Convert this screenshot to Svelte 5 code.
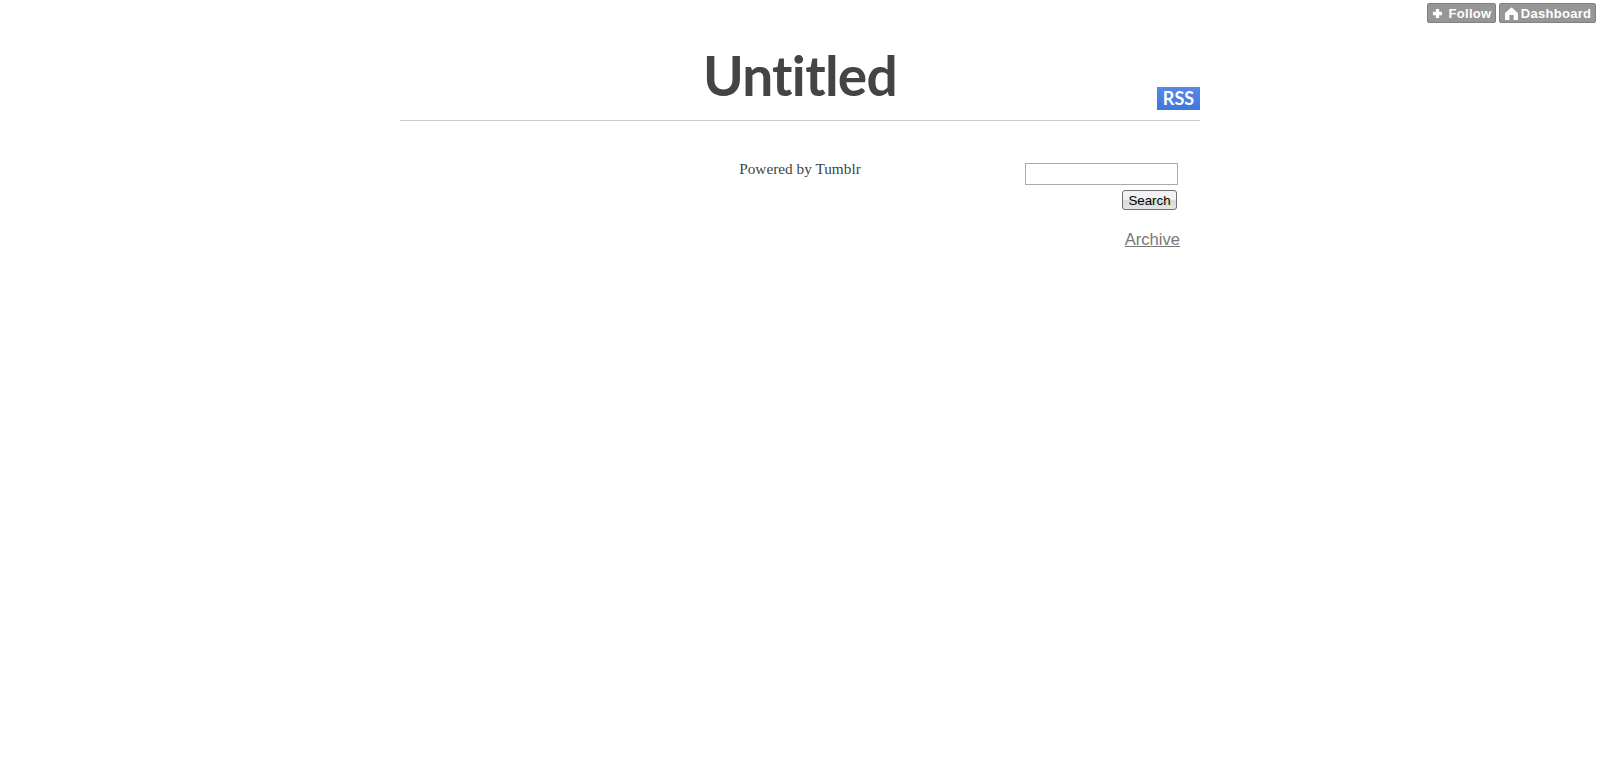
<script>
  let query = $state('');
</script>

<div class="controls">
  <a class="ctl" href="#follow">
    <svg viewBox="0 0 12 12" width="11" height="11" fill="#fff"><path d="M4.200 1h3.600v3.200H11v3.600H7.800V11H4.200V7.800H1V4.200h3.200z"/></svg>
    <span>Follow</span>
  </a>
  <a class="ctl" href="#dashboard">
    <svg viewBox="0 0 14 14" width="15" height="15" fill="#fff"><path d="M7 1.500Q6.500 1.500 6 2L1 6.500V13h4V8.500h4V13h4V6.500L8 2Q7.500 1.500 7 1.500z"/></svg>
    <span>Dashboard</span>
  </a>
</div>

<div class="page">
  <header class="head">
    <h1>Untitled</h1>
    <a class="rss" href="#rss">RSS</a>
  </header>

  <div class="body">
    <div class="left"></div>
    <p class="powered">Powered by Tumblr</p>
    <aside class="side">
      <form class="search" onsubmit={(e) => e.preventDefault()}>
        <input type="text" bind:value={query} />
        <button type="submit">Search</button>
      </form>
      <a class="archive" href="#archive">Archive</a>
    </aside>
  </div>
</div>

<style>
  :global(body) {
    background: #fff;
  }
  .controls {
    position: absolute;
    top: 3px;
    right: 4px;
    display: flex;
    gap: 3px;
  }
  .ctl {
    display: flex;
    align-items: center;
    justify-content: center;
    gap: 2px;
    height: 20px;
    box-sizing: border-box;
    padding: 0 3px;
    background: #969696;
    border: 1px solid #808080;
    border-radius: 2px;
    color: #fff;
    font: bold 13px "Liberation Sans", Arial, sans-serif;
    letter-spacing: 0.3px;
    text-decoration: none;
  }
  .ctl:first-child {
    width: 69px;
    gap: 6px;
  }
  .ctl:last-child {
    width: 97px;
  }
  .page {
    width: 800px;
    margin: 0 auto;
  }
  .head {
    position: relative;
    height: 121px;
    box-sizing: border-box;
    border-bottom: 1px solid #ccc;
    text-align: center;
  }
  h1 {
    margin: 0;
    padding-top: 42px;
    font: 700 55px/1.2 Lato, "Open Sans", sans-serif;
    letter-spacing: -0.7px;
    color: #444;
  }
  .rss {
    position: absolute;
    right: 0;
    bottom: 10px;
    width: 43px;
    height: 23px;
    background: linear-gradient(#5a86e6, #3f78dc);
    color: #fff;
    font: 700 18px/23px Lato, sans-serif;
    text-align: center;
    text-decoration: none;
  }
  .body {
    display: grid;
    grid-template-columns: 300px 200px 300px;
    padding-top: 41px;
  }
  .powered {
    margin: 0;
    text-align: center;
    color: #444;
    font: 15.300px/14px "Liberation Serif", "Times New Roman", serif;
  }
  .side {
    display: flex;
    flex-direction: column;
    align-items: flex-end;
    padding-right: 20px;
  }
  .search {
    display: flex;
    flex-direction: column;
    align-items: flex-end;
    gap: 5px;
    margin-top: 1px;
    margin-right: 2px;
  }
  input {
    width: 153px;
    height: 22px;
    box-sizing: border-box;
    border: 1px solid #a9a9a9;
    padding: 1px 2px;
    background: #fff;
    margin: 0;
  }
  button {
    width: 55px;
    height: 20px;
    margin: 0 1px 0 0;
    padding: 0;
    border: 1px solid #707070;
    border-radius: 3px;
    background: linear-gradient(#f2f2f2 0 45%, #d8d8d8 55%, #e4e4e4);
    color: #000;
    font: 13.300px "Liberation Sans", Arial, sans-serif;
  }
  .archive {
    margin-top: 20px;
    color: #777;
    font: 16.600px/1.2 "Liberation Sans", Arial, sans-serif;
    text-decoration: underline;
  }
</style>
